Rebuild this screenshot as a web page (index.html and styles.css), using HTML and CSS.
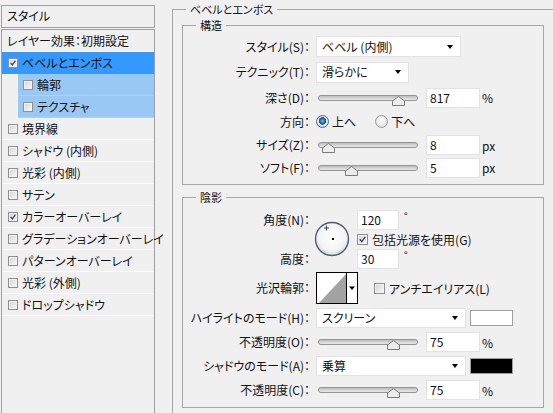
FILE: index.html
```html
<!DOCTYPE html>
<html lang="ja">
<head>
    <meta charset="UTF-8">
    <meta name="viewport" content="width=device-width, initial-scale=1.0">
    <link rel="stylesheet" href="styles.css">
    <title>レイヤースタイル</title>
</head>
<body>
<div class="sidebar">
    <div class="side-title">スタイル</div>
    <ul class="effects">
        <li class="effect head">レイヤー効果：初期設定</li>
        <li class="effect active"><span class="cb on"><svg viewBox="0 0 10 10"><path d="M2 4.8l2.2 2.6 3.8-5.4"/></svg></span>ベベルとエンボス</li>
        <li class="effect sub"><span class="cb"></span>輪郭</li>
        <li class="effect sub"><span class="cb"></span>テクスチャ</li>
        <li class="effect"><span class="cb"></span>境界線</li>
        <li class="effect"><span class="cb"></span>シャドウ (内側)</li>
        <li class="effect"><span class="cb"></span>光彩 (内側)</li>
        <li class="effect"><span class="cb"></span>サテン</li>
        <li class="effect"><span class="cb on"><svg viewBox="0 0 10 10"><path d="M2 4.8l2.2 2.6 3.8-5.4"/></svg></span>カラーオーバーレイ</li>
        <li class="effect"><span class="cb"></span>グラデーションオーバーレイ</li>
        <li class="effect"><span class="cb"></span>パターンオーバーレイ</li>
        <li class="effect"><span class="cb"></span>光彩 (外側)</li>
        <li class="effect"><span class="cb"></span>ドロップシャドウ</li>
    </ul>
</div>

<div class="settings">
    <fieldset class="group outer">
        <legend>ベベルとエンボス</legend>

        <fieldset class="group inner structure">
            <legend>構造</legend>
            <div class="field h25">
                <span class="label">スタイル(S)：</span>
                <div class="ctrl"><div class="select w-style">ベベル (内側)<i class="arrow"></i></div></div>
            </div>
            <div class="field h26">
                <span class="label">テクニック(T)：</span>
                <div class="ctrl"><div class="select w-tech">滑らかに<i class="arrow"></i></div></div>
            </div>
            <div class="field h25">
                <span class="label">深さ(D)：</span>
                <div class="ctrl">
                    <div class="slider"><svg class="thumb" style="left: 81%" viewBox="0 0 13 10"><path d="M6.5 0.5l6 4.5v4.5h-12v-4.5z"/></svg></div>
                    <div class="num">817</div><span class="unit">%</span>
                </div>
            </div>
            <div class="field h23">
                <span class="label">方向：</span>
                <div class="ctrl">
                    <span class="radio on"></span><span class="opt">上へ</span>
                    <span class="radio gap"></span><span class="opt">下へ</span>
                </div>
            </div>
            <div class="field">
                <span class="label">サイズ(Z)：</span>
                <div class="ctrl">
                    <div class="slider"><svg class="thumb" style="left: 9%" viewBox="0 0 13 10"><path d="M6.5 0.5l6 4.5v4.5h-12v-4.5z"/></svg></div>
                    <div class="num">8</div><span class="unit">px</span>
                </div>
            </div>
            <div class="field h21">
                <span class="label">ソフト(F)：</span>
                <div class="ctrl">
                    <div class="slider"><svg class="thumb" style="left: 33%" viewBox="0 0 13 10"><path d="M6.5 0.5l6 4.5v4.5h-12v-4.5z"/></svg></div>
                    <div class="num">5</div><span class="unit">px</span>
                </div>
            </div>
        </fieldset>

        <fieldset class="group inner shading">
            <legend>陰影</legend>
            <div class="angle">
                <span class="label row1">角度(N)：</span>
                <svg class="dial" width="36" height="36" viewBox="0 0 36 36">
                    <defs>
                        <radialGradient id="dialFill" cx="50%" cy="45%" r="55%">
                            <stop offset="0" stop-color="#ffffff"/>
                            <stop offset="0.75" stop-color="#f3f3f5"/>
                            <stop offset="1" stop-color="#d2d5dc"/>
                        </radialGradient>
                    </defs>
                    <circle cx="18" cy="18" r="16.5" fill="url(#dialFill)" stroke="#4f5d73" stroke-width="1.4"/>
                    <path d="M12.5 4.5v5M10 7h5" stroke="#222" stroke-width="0.8"/>
                    <rect x="18" y="17" width="2" height="2" fill="#000"/>
                </svg>
                <div class="ctrl row1"><div class="num small">120</div><span class="deg">°</span></div>
                <div class="ctrl row2"><span class="cb big on"><svg viewBox="0 0 10 10"><path d="M2 4.8l2.2 2.6 3.8-5.4"/></svg></span><span class="check-label">包括光源を使用(G)</span></div>
                <span class="label row3">高度：</span>
                <div class="ctrl row3"><div class="num small">30</div><span class="deg">°</span></div>
            </div>

            <div class="field h36">
                <span class="label">光沢輪郭：</span>
                <div class="ctrl">
                    <svg class="contour" width="42" height="32" viewBox="0 0 42 32">
                        <rect x="0.5" y="0.5" width="41" height="31" fill="#fff" stroke="#000"/>
                        <path d="M3 31L30 2V31Z" fill="#a3a3a3"/>
                        <path d="M30.5 0.5V31.5" stroke="#000"/>
                        <path d="M33 14.5h6l-3 3.5z" fill="#000"/>
                    </svg>
                    <span class="cb big aa"></span><span class="check-label">アンチエイリアス(L)</span>
                </div>
            </div>
            <div class="field">
                <span class="label">ハイライトのモード(H)：</span>
                <div class="ctrl"><div class="select w-mode">スクリーン<i class="arrow"></i></div><span class="swatch"></span></div>
            </div>
            <div class="field">
                <span class="label">不透明度(O)：</span>
                <div class="ctrl">
                    <div class="slider"><svg class="thumb" style="left: 75%" viewBox="0 0 13 10"><path d="M6.5 0.5l6 4.5v4.5h-12v-4.5z"/></svg></div>
                    <div class="num">75</div><span class="unit">%</span>
                </div>
            </div>
            <div class="field">
                <span class="label">シャドウのモード(A)：</span>
                <div class="ctrl"><div class="select w-mode">乗算<i class="arrow"></i></div><span class="swatch black"></span></div>
            </div>
            <div class="field">
                <span class="label">不透明度(C)：</span>
                <div class="ctrl">
                    <div class="slider"><svg class="thumb" style="left: 75%" viewBox="0 0 13 10"><path d="M6.5 0.5l6 4.5v4.5h-12v-4.5z"/></svg></div>
                    <div class="num">75</div><span class="unit">%</span>
                </div>
            </div>
        </fieldset>
    </fieldset>
</div>
</body>
</html>
```

FILE: styles.css
```css
* {
    box-sizing: border-box;
}

body {
    margin: 0;
    width: 553px;
    height: 413px;
    overflow: hidden;
    display: flex;
    background: #f0f0f0;
    color: #111;
    font-family: "Noto Sans CJK JP", sans-serif;
    font-size: 12px;
    font-feature-settings: "palt";
}

/* left list */
.sidebar {
    width: 154px;
    margin-left: 1px;
    flex-shrink: 0;
    display: flex;
    flex-direction: column;
}

.side-title {
    margin-top: 5px;
    height: 23px;
    border: 1px solid #a0a0a0;
    padding-left: 5px;
    line-height: 19px;
}

.effects {
    list-style: none;
    margin: 1px 0 0;
    padding: 0;
    flex: 1;
    border: 1px solid #a0a0a0;
    border-bottom: none;
}

.effect {
    height: 22px;
    padding-left: 6px;
    display: flex;
    align-items: center;
    gap: 4px;
    border-bottom: 1px solid #fbfbfb;
    white-space: nowrap;
}

.effect.head {
    padding-left: 5px;
}

.effect.active {
    background: #3399ff;
    border-bottom-color: #3399ff;
}

.effect.sub {
    margin-left: 16px;
    padding-left: 5px;
    background: #99c8f4;
    border-bottom-color: #a9d2f6;
}

.cb {
    width: 10px;
    height: 10px;
    flex-shrink: 0;
    border: 1px solid #8f8f8f;
    background: linear-gradient(135deg, #d4d4d4, #f9f9f9);
    box-shadow: inset 0 0 0 1px #f2f2f2;
}

.cb svg {
    display: block;
    width: 100%;
    height: 100%;
    fill: none;
    stroke: #34457a;
    stroke-width: 1.6;
}

.cb.big {
    width: 11px;
    height: 11px;
}

/* right side */
.settings {
    flex: 1;
    margin: 3px 0 0 17px;
}

.group {
    margin: 0;
    padding: 0;
    min-width: 0;
    border: 1px solid #a6a6a6;
}

.group > legend {
    margin-left: 13px;
    padding: 0 4px;
    font-size: 11px;
    line-height: 12px;
}

.group.outer {
    height: 420px;
    border-right: none;
    border-bottom: none;
}

.group.inner {
    margin: 0 9px;
}

.structure {
    margin-top: 4px !important;
    padding: 3px 0 6px;
}

.shading {
    margin-top: 6px !important;
    padding: 6px 0 5px;
}

.field {
    display: grid;
    grid-template-columns: 127px 1fr;
    column-gap: 6px;
    align-items: center;
    height: 24px;
}

.h21 { height: 21px; }
.h23 { height: 23px; }
.h25 { height: 25px; }
.h26 { height: 26px; }
.h36 { height: 36px; }

.label {
    text-align: right;
    white-space: nowrap;
    line-height: 16px;
}

.ctrl {
    display: flex;
    align-items: center;
}

.select {
    height: 21px;
    padding: 0 5px;
    display: flex;
    align-items: center;
    justify-content: space-between;
    background: #fff;
    border: 1px solid #e3e3e3;
    line-height: 16px;
}

.w-style { width: 145px; }
.w-tech { width: 93px; }
.w-mode { width: 150px; height: 20px; }

.arrow {
    width: 0;
    height: 0;
    margin-right: 2px;
    border-top: 4px solid #000;
    border-left: 3.5px solid transparent;
    border-right: 3.5px solid transparent;
}

.slider {
    position: relative;
    width: 100px;
    height: 6px;
    margin-left: 2px;
    border: 1px solid #959595;
    border-radius: 3px;
    background: linear-gradient(#bdbdbd, #e9e9e9);
}

.thumb {
    position: absolute;
    top: 0;
    width: 13px;
    height: 10px;
    margin-left: -6px;
    fill: #ececec;
    stroke: #7c7c7c;
    stroke-width: 1;
}

.num {
    width: 54px;
    height: 20px;
    margin-left: 8px;
    padding-left: 3px;
    background: #fff;
    border: 1px solid #e2e2e2;
    line-height: 18px;
}

.num.small {
    width: 42px;
    margin-left: 0;
}

.unit {
    margin-left: 2px;
}

.deg {
    align-self: flex-start;
    margin-left: 5px;
    font-size: 10px;
    line-height: 12px;
}

.radio {
    width: 13px;
    height: 13px;
    flex-shrink: 0;
    border-radius: 50%;
    border: 1px solid #9a9a9a;
    background: radial-gradient(circle at 50% 40%, #ffffff, #d8d8d8);
}

.radio.on {
    border-color: #4a6a8a;
    background: radial-gradient(circle at 50% 45%, #7cc8f0 0, #2a78b4 2px, #17507e 3.5px, #e6ecf2 4px, #c8d0da 100%);
}

.radio.gap {
    margin-left: 19px;
}

.opt {
    margin-left: 3px;
}

/* angle / altitude */
.angle {
    display: grid;
    grid-template-columns: 127px 47px 1fr;
    grid-template-rows: 22px 17px 22px;
    align-items: center;
}

.row1 { grid-row: 1; }
.row2 { grid-row: 2; grid-column: 3; }
.row3 { grid-row: 3; }

.angle .label { grid-column: 1; }
.angle .ctrl.row1,
.angle .ctrl.row3 { grid-column: 3; }

.dial {
    grid-column: 2;
    grid-row: 1 / 4;
    align-self: start;
    margin: 12px 0 0 4px;
}

.check-label {
    margin-left: 4px;
    white-space: nowrap;
}

.contour {
    display: block;
}

.cb.aa {
    margin-left: 16px;
}

.swatch {
    width: 43px;
    height: 16px;
    margin-left: 4px;
    background: #fff;
    border: 1px solid #a0a0a0;
}

.swatch.black {
    background: #000;
}
```
